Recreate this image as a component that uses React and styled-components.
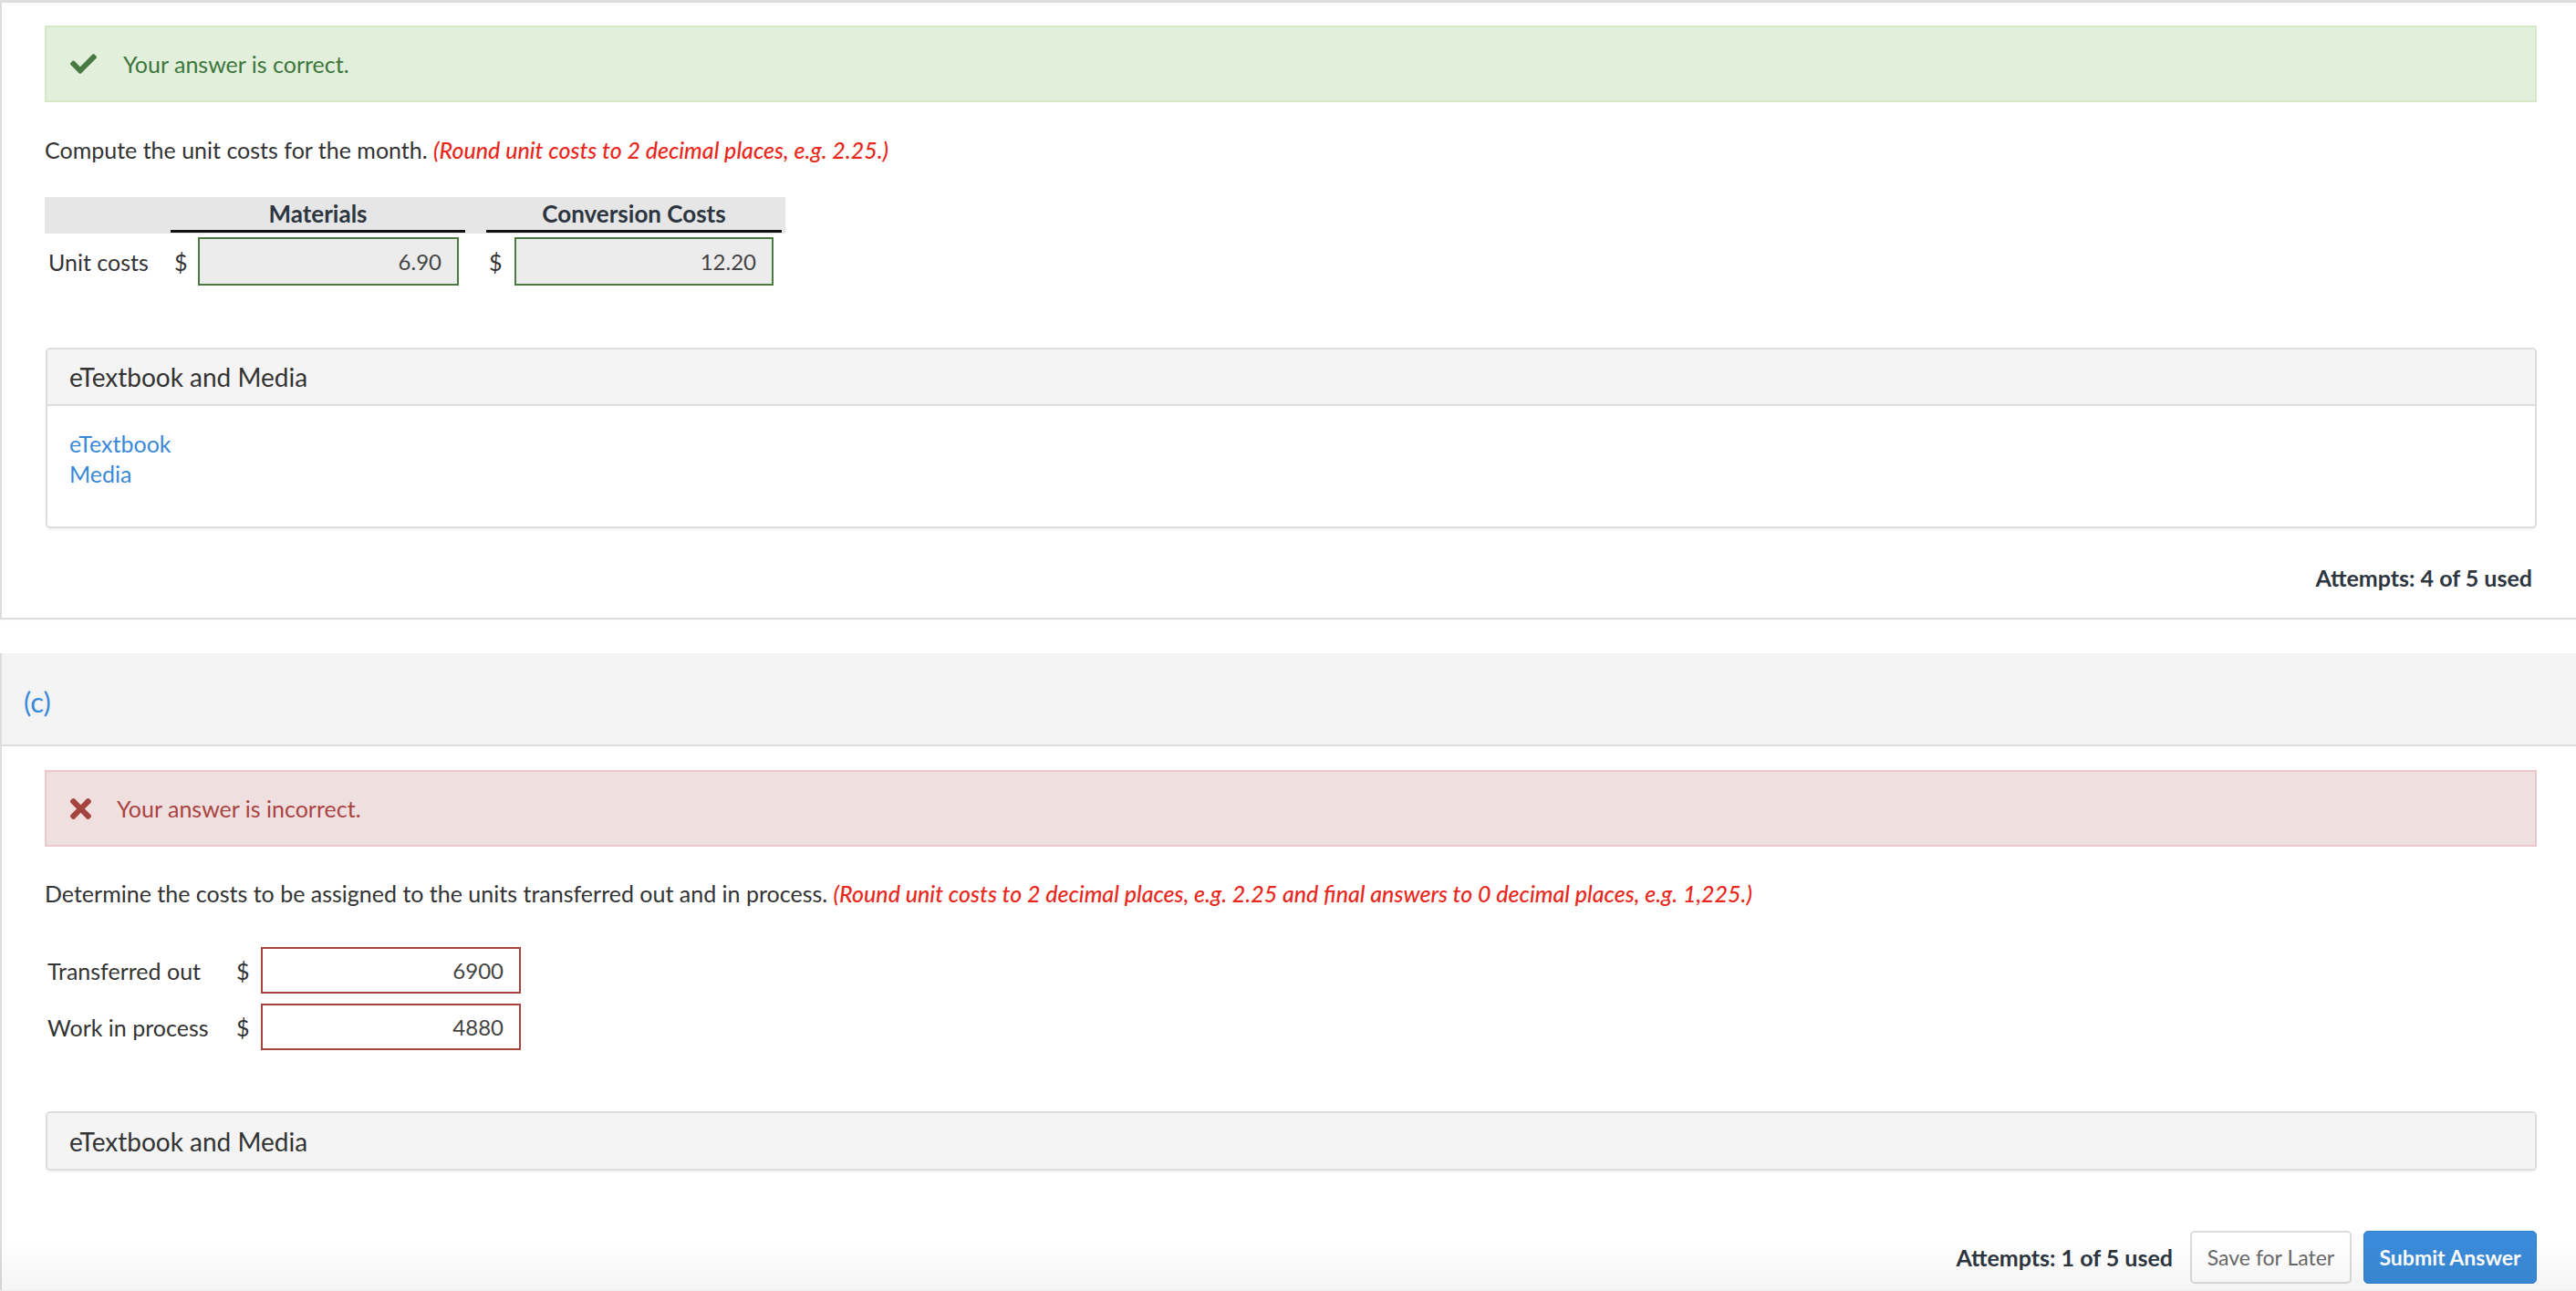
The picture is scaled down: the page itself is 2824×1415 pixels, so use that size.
import React from 'react';
import styled, { createGlobalStyle } from 'styled-components';

const GlobalStyle = createGlobalStyle`
  html, body {
    margin: 0;
    padding: 0;
    background: #fff;
  }
  body {
    font-family: Lato, "Open Sans", "Liberation Sans", sans-serif;
    font-size: 25px;
    line-height: 36px;
    color: #333;
  }
`

const Page = styled.div`
  display: flex;
  flex-direction: column;
  gap: 37px;
  padding-bottom: 8px;
`

const Card = styled.section`
  border: 2px solid #ddd;
  border-right: none;
  border-top-width: ${p => (p.$topBorder ? '3px' : '0')};
  border-bottom-width: ${p => (p.$bottomBorder ? '2px' : '0')};
  box-shadow: 0 1px 2px rgba(0, 0, 0, 0.04);
`

const CardBody = styled.div`
  padding: ${p => p.$pad || '25px 43px 26px 47px'};
`

const PartHeader = styled.div`
  background: #f4f4f4;
  border-bottom: 2px solid #ddd;
  padding: 32px 24px 26px;
  font-size: 31px;
  line-height: 42px;
  color: #3a89d9;
`

const Alert = styled.div`
  display: flex;
  align-items: center;
  height: 80px;
  padding: 0 26px;
  gap: ${p => (p.$ok ? '29px' : '28px')};
  background: ${p => (p.$ok ? '#e2efda' : '#f0dfdf')};
  border: 2px solid ${p => (p.$ok ? '#d5e8c7' : '#e8c8cb')};
  color: ${p => (p.$ok ? '#3c763d' : '#a94442')};
`

const Prompt = styled.p`
  margin: ${p => p.$margin || '34px 0 0'};
  color: #333;
`

const Hint = styled.em`
  color: #e8281c;
  font-weight: 500;
`

const CostTable = styled.div`
  margin-top: 34px;
  width: 812px;
`

const HeadRow = styled.div`
  display: flex;
  background: #e6e6e6;
  padding: 0 4px 1px 0;
`

const HeadCell = styled.div`
  width: ${p => p.$width};
  margin-left: ${p => p.$offset || '0'};
  text-align: center;
  font-size: 26px;
  font-weight: 700;
  color: #2d3640;
  border-bottom: ${p => (p.$blank ? 'none' : '3px solid #111')};
`

const BodyRow = styled.div`
  display: flex;
  align-items: center;
  margin-top: 4px;
`

const RowLabel = styled.span`
  box-sizing: border-box;
  padding-left: ${p => p.$pad || '4px'};
  width: ${p => p.$width || 'auto'};
  color: #333;
`

const Field = styled.div`
  display: flex;
  align-items: center;
  margin-left: ${p => p.$offset || '0'};
`

const Dollar = styled.span`
  width: ${p => p.$width || '30px'};
  padding-left: ${p => p.$pad || '4px'};
  box-sizing: border-box;
  color: #333;
`

const Input = styled.div`
  box-sizing: border-box;
  width: ${p => p.$width || '286px'};
  height: ${p => p.$height || '53px'};
  display: flex;
  align-items: center;
  justify-content: flex-end;
  padding-right: 17px;
  font-size: 24px;
  color: #444;
  background: ${p => (p.$ok ? '#ececec' : '#fff')};
  border: 2px solid ${p => (p.$ok ? '#4b7b3f' : '#a5443f')};
`

const AnswerList = styled.div`
  margin-top: 41px;
  display: flex;
  flex-direction: column;
  gap: 11px;
`

const AnswerRow = styled.div`
  display: flex;
  align-items: center;
`

const Panel = styled.div`
  margin-top: ${p => p.$mt || '68px'};
  margin-left: 1px;
  border: 2px solid #ddd;
  border-radius: 5px;
  overflow: hidden;
  box-shadow: 0 2px 2px rgba(0, 0, 0, 0.06);
`

const PanelHeader = styled.div`
  background: #f4f4f4;
  padding: ${p => (p.$open ? '10px 24px' : '11px 24px 10px')};
  font-size: 28px;
  line-height: 40px;
  color: #333;
  border-bottom: ${p => (p.$open ? '2px solid #ddd' : 'none')};
`

const PanelBody = styled.div`
  padding: 25px 24px 41px;
  display: flex;
  flex-direction: column;
  line-height: 33px;
`

const Link = styled.a`
  color: #3a89d9;
  text-decoration: none;
  align-self: flex-start;
`

const Footer = styled.div`
  margin-top: ${p => p.$mt || '36px'};
  display: flex;
  justify-content: flex-end;
  align-items: center;
  gap: 19px;
  padding-right: ${p => p.$pr || '5px'};
`

const Attempts = styled.span`
  font-weight: 700;
  color: #2d3640;
`

const Buttons = styled.div`
  display: flex;
  gap: 13px;
`

const Button = styled.button`
  box-sizing: border-box;
  font-family: inherit;
  font-size: 23px;
  height: 58px;
  padding: 0;
  border-radius: 5px;
  cursor: pointer;
  width: ${p => (p.$primary ? '190px' : '177px')};
  font-weight: ${p => (p.$primary ? 700 : 400)};
  color: ${p => (p.$primary ? '#fff' : '#6a6a6a')};
  background: ${p => (p.$primary ? '#3a8bd9' : '#fff')};
  border: ${p => (p.$primary ? '1px solid #317fcb' : '2px solid #dcdcdc')};
`

const BottomFade = styled.div`
  position: fixed;
  left: 0;
  right: 0;
  bottom: 0;
  height: 56px;
  pointer-events: none;
  background: linear-gradient(to bottom, rgba(0, 0, 0, 0), rgba(0, 0, 0, 0.045));
`

const CheckIcon = () => (
  <svg width="29" height="22" viewBox="0 66 512 380" fill="#477a42">
    <path d="M173.898 439.404l-166.4-166.4c-9.997-9.997-9.997-26.206 0-36.204l36.203-36.204c9.997-9.998 26.207-9.998 36.204 0L192 312.69 432.095 72.596c9.997-9.997 26.207-9.997 36.204 0l36.203 36.204c9.997 9.997 9.997 26.206 0 36.204l-294.4 294.401c-9.998 9.997-26.207 9.997-36.204-.001z" />
  </svg>
)

const TimesIcon = () => (
  <svg width="23" height="23" viewBox="0 80 352 352" fill="#a5443f">
    <path d="M242.72 256l100.07-100.07c12.28-12.28 12.28-32.19 0-44.480l-22.24-22.24c-12.28-12.28-32.19-12.28-44.48 0L176 189.28 75.93 89.21c-12.28-12.28-32.19-12.28-44.48 0L9.21 111.45c-12.28 12.28-12.28 32.19 0 44.48L109.28 256 9.21 356.07c-12.28 12.28-12.28 32.19 0 44.48l22.24 22.24c12.28 12.28 32.2 12.28 44.48 0L176 322.72l100.07 100.07c12.28 12.28 32.2 12.28 44.48 0l22.24-22.24c12.28-12.28 12.28-32.19 0-44.48L242.72 256z" />
  </svg>
)

const answers = [
  { label: 'Transferred out', value: '6900' },
  { label: 'Work in process', value: '4880' }
]

export default function App() {
  return (
    <>
      <GlobalStyle />
      <Page>
        <Card $topBorder $bottomBorder>
          <CardBody>
            <Alert $ok>
              <CheckIcon />
              <span>Your answer is correct.</span>
            </Alert>

            <Prompt>
              Compute the unit costs for the month.{' '}
              <Hint>(Round unit costs to 2 decimal places, e.g. 2.25.)</Hint>
            </Prompt>

            <CostTable>
              <HeadRow>
                <HeadCell $blank $width="138px" />
                <HeadCell $width="323px">Materials</HeadCell>
                <HeadCell $width="324px" $offset="23px">Conversion Costs</HeadCell>
              </HeadRow>
              <BodyRow>
                <RowLabel $width="138px">Unit costs</RowLabel>
                <Field>
                  <Dollar>$</Dollar>
                  <Input $ok>6.90</Input>
                </Field>
                <Field $offset="30px">
                  <Dollar $width="31px" $pad="3px">$</Dollar>
                  <Input $ok $width="284px">12.20</Input>
                </Field>
              </BodyRow>
            </CostTable>

            <Panel>
              <PanelHeader $open>eTextbook and Media</PanelHeader>
              <PanelBody>
                <Link href="#">eTextbook</Link>
                <Link href="#">Media</Link>
              </PanelBody>
            </Panel>

            <Footer>
              <Attempts>Attempts: 4 of 5 used</Attempts>
            </Footer>
          </CardBody>
        </Card>

        <Card>
          <PartHeader>(c)</PartHeader>
          <CardBody $pad="26px 43px 7px 47px">
            <Alert>
              <TimesIcon />
              <span>Your answer is incorrect.</span>
            </Alert>

            <Prompt $margin="33px 0 0">
              Determine the costs to be assigned to the units transferred out and in process.{' '}
              <Hint>
                (Round unit costs to 2 decimal places, e.g. 2.25 and final answers to 0 decimal places, e.g. 1,225.)
              </Hint>
            </Prompt>

            <AnswerList>
              {answers.map(a => (
                <AnswerRow key={a.label}>
                  <RowLabel $pad="3px" $width="210px">{a.label}</RowLabel>
                  <Dollar $width="27px" $pad="0">$</Dollar>
                  <Input $width="285px" $height="51px">{a.value}</Input>
                </AnswerRow>
              ))}
            </AnswerList>

            <Panel $mt="67px">
              <PanelHeader>eTextbook and Media</PanelHeader>
            </Panel>

            <Footer $mt="66px" $pr="0">
              <Attempts>Attempts: 1 of 5 used</Attempts>
              <Buttons>
                <Button>Save for Later</Button>
                <Button $primary>Submit Answer</Button>
              </Buttons>
            </Footer>
          </CardBody>
        </Card>
      </Page>
      <BottomFade />
    </>
  );
}
